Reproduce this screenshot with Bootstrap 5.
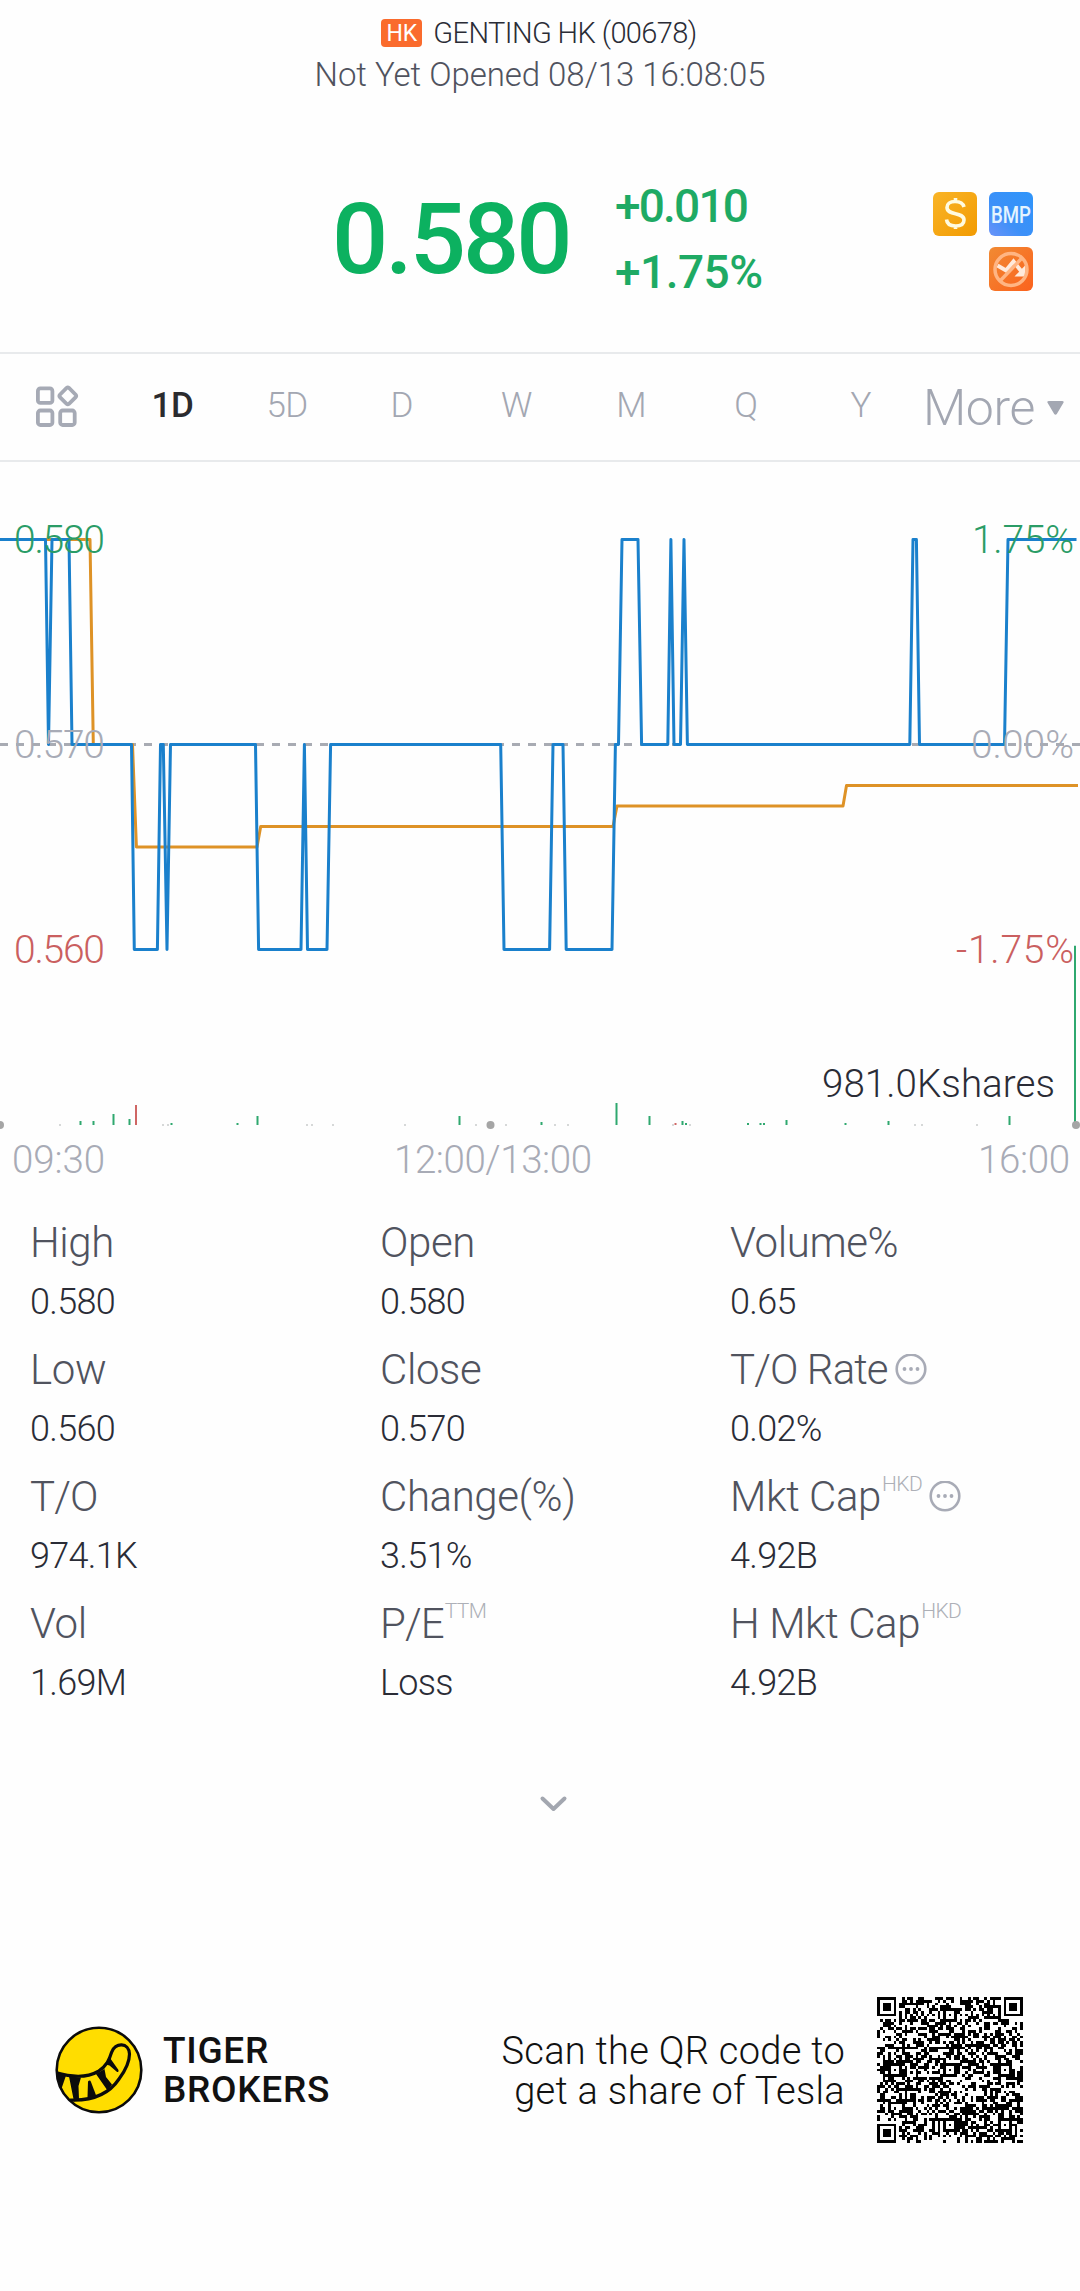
<!DOCTYPE html>
<html lang="en">
<head>
    <meta charset="UTF-8">
    <meta name="viewport" content="width=device-width, initial-scale=1.0">
    <title>GENTING HK (00678)</title>
    <link href="https://cdn.jsdelivr.net/npm/bootstrap@5.3.0/dist/css/bootstrap.min.css" rel="stylesheet">
    <style>
        body {
            background: #fefefe;
            font-family: Roboto, "Open Sans", sans-serif;
            font-weight: 350;
            color: #2a2c36;
            overflow-x: hidden;
        }
        svg { display: block; flex: none; }
        .quote-head { padding-top: 13px; height: 166px; }
        .stock-name { font-size: 29px; line-height: 40px; letter-spacing: -.6px; gap: 11px; padding-right: 2px; }
        .market-tag {
            width: 41px; height: 28px; line-height: 29px;
            border-radius: 4px; background: #fa6b2d; color: #fff;
            font-size: 23px; font-weight: 400; letter-spacing: 0;
        }
        .stock-time { font-size: 33px; line-height: 44px; color: #50535e; letter-spacing: -.05px; }
        .price-row { height: 186px; padding: 0 47px 42px 332px; }
        .price { font-size: 99px; line-height: 100px; font-weight: 500; color: #0cb160; letter-spacing: -3px; width: 283px; padding-top: 2px; }
        .delta { font-size: 46px; line-height: 66px; font-weight: 500; color: #1eaa64; letter-spacing: -1.8px; padding-top: 1px; height: 66px; }
        .delta-pct { letter-spacing: -.5px; }
        .tags { width: 100px; gap: 11px 12px; margin-top: 6px; }
        .period-bar { height: 110px; border-top: 2px solid #e8eaec; border-bottom: 2px solid #e8eaec; color: #a3a7b2; padding-left: 35px; }
        .periods { margin-left: 36px; width: 803px; }
        .periods a { flex: 1; text-align: center; font-size: 35px; color: inherit; text-decoration: none; margin-top: -2px; letter-spacing: -.5px; }
        .periods a.active { color: #2b2b2e; font-weight: 500; }
        .more { font-size: 50px; gap: 12px; margin-left: 5px; letter-spacing: -.4px; padding-top: 2px; }
        .stats { padding: 11px 0 0 30px; }
        .stat { height: 127px; }
        .stat-name { font-size: 42px; line-height: 60px; height: 60px; color: #50535e; letter-spacing: -.4px; }
        .name-tight { letter-spacing: -.9px; }
        .stat-name sup { font-size: 21px; line-height: 21px; color: #adb0b7; align-self: flex-start; top: 7px; margin-left: 1px; letter-spacing: -.6px; }
        .stat-name svg { margin-left: 7px; }
        .stat-value { font-size: 36px; line-height: 58px; letter-spacing: -.7px; }
        .expand { height: 276px; padding: 73px 0 0 538px; }
        .foot { padding: 0 57px 0 55px; height: 146px; color: #111; }
        .brand-name { font-size: 37px; line-height: 39.5px; font-weight: 500; margin-left: 20px; letter-spacing: .7px; }
        .scan { font-size: 38px; line-height: 40px; letter-spacing: .3px; margin-right: 32px; padding-top: 1px; }
    </style>
</head>
<body>

    <header class="quote-head text-center">
        <div class="stock-name d-flex justify-content-center align-items-center">
            <span class="market-tag">HK</span>
            <span>GENTING HK (00678)</span>
        </div>
        <div class="stock-time">Not Yet Opened 08/13 16:08:05</div>
    </header>

    <section class="price-row d-flex align-items-center">
        <div class="price">0.580</div>
        <div>
            <div class="delta">+0.010</div>
            <div class="delta delta-pct">+1.75%</div>
        </div>
        <div class="tags d-flex flex-wrap justify-content-end ms-auto">
            <svg width="44" height="44" viewBox="0 0 44 44">
                <defs>
                    <linearGradient id="gold" x1="0" y1="0" x2="1" y2="1"><stop offset="0" stop-color="#f9b427"/><stop offset="1" stop-color="#f29b02"/></linearGradient>
                    <linearGradient id="blue" x1="1" y1="0" x2="0" y2="1"><stop offset="0" stop-color="#2f95fa"/><stop offset=".6" stop-color="#3c90f8"/><stop offset="1" stop-color="#6a93f8"/></linearGradient>
                    <linearGradient id="red" x1="0" y1="0" x2="1" y2="1"><stop offset="0" stop-color="#f18a33"/><stop offset="1" stop-color="#fb621d"/></linearGradient>
                </defs>
                <rect width="44" height="44" rx="6" fill="url(#gold)"/>
                <path d="M31 15c-1-4-4.500-5.500-9-5.500-5 0-8 2.300-8 6 0 8.500 17 4 17 12.500 0 4-3.500 6-8.500 6s-8.500-2-9-6.500M22.500 6v3M22.500 34v3" fill="none" stroke="#fffbe0" stroke-width="3.600"/>
            </svg>
            <svg width="44" height="44" viewBox="0 0 44 44">
                <rect width="44" height="44" rx="6" fill="url(#blue)"/>
                <text x="22" y="30.500" font-size="23" font-weight="500" fill="#e4f4ff" text-anchor="middle" textLength="40" lengthAdjust="spacingAndGlyphs">BMP</text>
            </svg>
            <svg width="44" height="44" viewBox="0 0 44 44">
                <rect width="44" height="44" rx="6" fill="url(#red)"/>
                <path d="M8.500 18.500l8.500 5 7.500-9 8 10" fill="none" stroke="#ffeadb" stroke-width="4"/>
                <path d="M36.500 18v11.500h-11z" fill="#ffeadb"/>
                <circle cx="22" cy="22.500" r="16" fill="none" stroke="#ffb583" stroke-width="3.500"/>
                <path d="M11 34l22-23" stroke="#ffb583" stroke-width="3.500"/>
            </svg>
        </div>
    </section>

    <nav class="period-bar d-flex align-items-center">
        <svg width="44" height="44" viewBox="0 0 44 44" fill="none" stroke="#a6aab5" stroke-width="3.800">
            <rect x="2.900" y="3.400" width="14.500" height="14.500" rx="2.500"/>
            <path d="M31.600 3q1.200-1 2.400 0l6.700 6.700q1 1.200 0 2.400l-6.700 6.700q-1.200 1-2.400 0l-6.700-6.700q-1-1.200 0-2.400z"/>
            <rect x="2.900" y="25.500" width="14.500" height="14.500" rx="2.500"/>
            <rect x="25.200" y="25.500" width="14.500" height="14.500" rx="2.500"/>
        </svg>
        <div class="periods d-flex">
            <a href="#" class="active">1D</a>
            <a href="#">5D</a>
            <a href="#">D</a>
            <a href="#">W</a>
            <a href="#">M</a>
            <a href="#">Q</a>
            <a href="#">Y</a>
        </div>
        <div class="more d-flex align-items-center">More
            <svg width="17" height="14" viewBox="0 0 17 14"><path d="M2 0h13q2.500 0 1.300 2l-6.500 11q-1.300 1.500-2.600 0L.7 2Q-.5 0 2 0z" fill="#a3a7b2"/></svg>
        </div>
    </nav>

    <!-- intraday chart: dashed line = previous close, orange = average, blue = price -->
    <svg width="1080" height="740" viewBox="0 462 1080 740">
        <path d="M0 744.500H1080" stroke="#a8abb3" stroke-width="3" stroke-dasharray="8 8"/>
        <polyline fill="none" stroke="#de9226" stroke-width="3" stroke-linejoin="round" points="0,539.500 90,539.500 93.300,744.500 132.500,744.500 136.400,847 257,847 260.700,826.500 613,826.500 617,806 843,806 846.500,785.500 1078,785.500"/>
        <polyline fill="none" stroke="#1a80cc" stroke-width="3" stroke-linejoin="round" points="0,539.500 45.500,539.500 48.500,744.500 52,539.500 69,539.500 72,744.500 131.500,744.500 134.300,949.500 157.400,949.500 160.500,744.500 163.300,744.500 167,949.500 170.500,744.500 255.500,744.500 258.600,949.500 301,949.500 304.400,744.500 307.500,949.500 327,949.500 330.600,744.500 500.700,744.500 504,949.500 549.600,949.500 553,744.500 563,744.500 566.200,949.500 612,949.500 615.400,744.500 618.500,744.500 622,539.500 638,539.500 641.600,744.500 667.800,744.500 670.900,539.500 674,744.500 680.500,744.500 684,539.500 687.400,744.500 909.800,744.500 913,539.500 916.400,539.500 919.500,744.500 1004.500,744.500 1008,539.500 1076.500,539.500"/>

        <g font-size="39">
            <text x="14" y="553" textLength="91" fill="#2a9c66">0.580</text>
            <text x="14" y="758" textLength="91" fill="#a8abb6">0.570</text>
            <text x="14" y="963" textLength="91" fill="#ca5f60">0.560</text>
            <text x="972" y="553" textLength="102" fill="#2a9c66">1.75%</text>
            <text x="971" y="758" textLength="103" fill="#a8abb6">0.00%</text>
            <text x="956" y="963" textLength="118" fill="#ca5f60">-1.75%</text>
        </g>

        <!-- volume -->
        <path d="M59 1125h2M162 1125h2M167 1125h2M306 1125h2M311 1125h2M332 1125h2M404 1125h2M475 1125h2M505 1125h2M554 1125h2M567 1125h2M672 1125h2M689 1125h2M914 1125h2M921 1125h2M976 1125h2" stroke="#c9cccb" stroke-width="1.500"/>
        <path d="M80.500 1125v-4M93.500 1125v-4M113.500 1125v-11M129.500 1125v-6M171.500 1125v-2M237.500 1125v-2M257.500 1125v-9M459.500 1125v-9M541.500 1125v-3M616.500 1125v-22M649.500 1125v-9M682.500 1125v-4M686 1125v-2M748 1125v-2M760.500 1125v-2M764 1125v-2M786.500 1125v-5M845.500 1125v-2M888.500 1125v-4M1009.500 1125v-9M1075 1125V945.700" stroke="#2fa86f" stroke-width="2"/>
        <path d="M136 1125v-20M675.500 1125v-2" stroke="#cf6664" stroke-width="2"/>
        <g fill="#a5a5a5">
            <circle cx="0" cy="1125" r="4"/>
            <circle cx="490.500" cy="1125" r="4"/>
            <circle cx="1076" cy="1125" r="4"/>
        </g>
        <text x="822" y="1097" font-size="38.500" textLength="233" fill="#2a2c36">981.0Kshares</text>
        <g font-size="38.500" fill="#a8abb6">
            <text x="12" y="1173" textLength="93">09:30</text>
            <text x="394" y="1173" textLength="198">12:00/13:00</text>
            <text x="978" y="1173" textLength="92">16:00</text>
        </g>
    </svg>

    <section class="stats">
        <div class="row row-cols-3 g-0">
            <div class="col stat"><div class="stat-name">High</div><div class="stat-value">0.580</div></div>
            <div class="col stat"><div class="stat-name">Open</div><div class="stat-value">0.580</div></div>
            <div class="col stat"><div class="stat-name">Volume%</div><div class="stat-value">0.65</div></div>
            <div class="col stat"><div class="stat-name">Low</div><div class="stat-value">0.560</div></div>
            <div class="col stat"><div class="stat-name">Close</div><div class="stat-value">0.570</div></div>
            <div class="col stat">
                <div class="stat-name name-tight d-flex align-items-center"><span>T/O Rate</span>
                    <svg width="32" height="32" viewBox="0 0 32 32"><circle cx="16" cy="15" r="14.300" fill="none" stroke="#a8abb6" stroke-width="2.600"/><path d="M9.500 15h.01M16 15h.01M22.500 15h.01" stroke="#a8abb6" stroke-width="3.800" stroke-linecap="round"/></svg>
                </div>
                <div class="stat-value">0.02%</div>
            </div>
            <div class="col stat"><div class="stat-name name-tight">T/O</div><div class="stat-value">974.1K</div></div>
            <div class="col stat"><div class="stat-name">Change(%)</div><div class="stat-value">3.51%</div></div>
            <div class="col stat">
                <div class="stat-name d-flex align-items-center"><span>Mkt Cap</span><sup>HKD</sup>
                    <svg width="32" height="32" viewBox="0 0 32 32"><circle cx="16" cy="15" r="14.300" fill="none" stroke="#a8abb6" stroke-width="2.600"/><path d="M9.500 15h.01M16 15h.01M22.500 15h.01" stroke="#a8abb6" stroke-width="3.800" stroke-linecap="round"/></svg>
                </div>
                <div class="stat-value">4.92B</div>
            </div>
            <div class="col stat"><div class="stat-name">Vol</div><div class="stat-value">1.69M</div></div>
            <div class="col stat"><div class="stat-name name-tight d-flex"><span>P/E</span><sup>TTM</sup></div><div class="stat-value">Loss</div></div>
            <div class="col stat"><div class="stat-name d-flex"><span>H Mkt Cap</span><sup>HKD</sup></div><div class="stat-value">4.92B</div></div>
        </div>
    </section>

    <div class="expand">
        <svg width="32" height="20" viewBox="0 0 32 20"><path d="M4.500 4.500L15.500 15l11-10.500" fill="none" stroke="#a3a7b0" stroke-width="4" stroke-linecap="round" stroke-linejoin="round"/></svg>
    </div>

    <footer class="foot d-flex align-items-center">
        <svg width="88" height="88" viewBox="0 0 88 88">
            <defs><clipPath id="disc"><circle cx="44" cy="44" r="42.500"/></clipPath></defs>
            <circle cx="44" cy="44" r="42.500" fill="#ffdd00"/>
            <g clip-path="url(#disc)" fill="none" stroke="#0b0b0b" stroke-width="3.200">
                <path d="M0 46.500C12 50 30 53 43 45.500 52 40 54.500 33 56.500 26.500 60 16 74 16 74.500 28 74.500 35 70 45 64 53 54 68 38 75 15 74"/>
                <g fill="#0b0b0b" stroke="none">
                    <path d="M0 46l11 3.500L6 64z"/>
                    <path d="M14 50.500l12 1-2.500 8.500.5 13-5 2.500z"/>
                    <path d="M33 55.500q2-2 3 .5l5.500 14.500-7 2.500-2-2z"/>
                    <path d="M41 48l8.500-5 1.500 8 6 7.500-4.500 6z"/>
                    <path d="M51 38.500l4-6.500 8.500 12q.5 3-2 1.500l-7-6z"/>
                </g>
            </g>
            <circle cx="44" cy="44" r="42.300" fill="none" stroke="#0b0b0b" stroke-width="2.600"/>
        </svg>
        <div class="brand-name">TIGER<br>BROKERS</div>
        <div class="scan text-end ms-auto">Scan the QR code to<br>get a share of Tesla</div>
        <svg id="qr" width="146" height="146" viewBox="0 0 53 53" shape-rendering="crispEdges"><path fill="#000"/></svg>
    </footer>

    <script src="https://cdn.jsdelivr.net/npm/bootstrap@5.3.0/dist/js/bootstrap.bundle.min.js"></script>
    <script>
        // 53x53 modules: finders, timing lines, alignment marks, then the data area
        const N = 53;
        let seed = 678;
        function next() {
            seed = (seed * 1103515245 + 12345) % 2147483648;
            return seed / 2147483648;
        }
        function ring(x, y, cx, cy) {
            return Math.max(Math.abs(x - cx), Math.abs(y - cy));
        }
        const finders = [[3, 3], [49, 3], [3, 49]];
        const marks = [[26, 6], [6, 26], [26, 26], [46, 26], [26, 46], [46, 46]];
        let d = '';
        for (let y = 0; y < N; y++) {
            for (let x = 0; x < N; x++) {
                let on = next() > 0.5;
                if (x === 6) on = y % 2 === 0;
                if (y === 6) on = x % 2 === 0;
                marks.forEach(m => { const r = ring(x, y, m[0], m[1]); if (r <= 2) on = r !== 1; });
                finders.forEach(f => { const r = ring(x, y, f[0], f[1]); if (r <= 4) on = r < 2 || r === 3; });
                if (on) d += 'M' + x + ' ' + y + 'h1v1h-1z';
            }
        }
        document.querySelector('#qr path').setAttribute('d', d);
    </script>
</body>
</html>
